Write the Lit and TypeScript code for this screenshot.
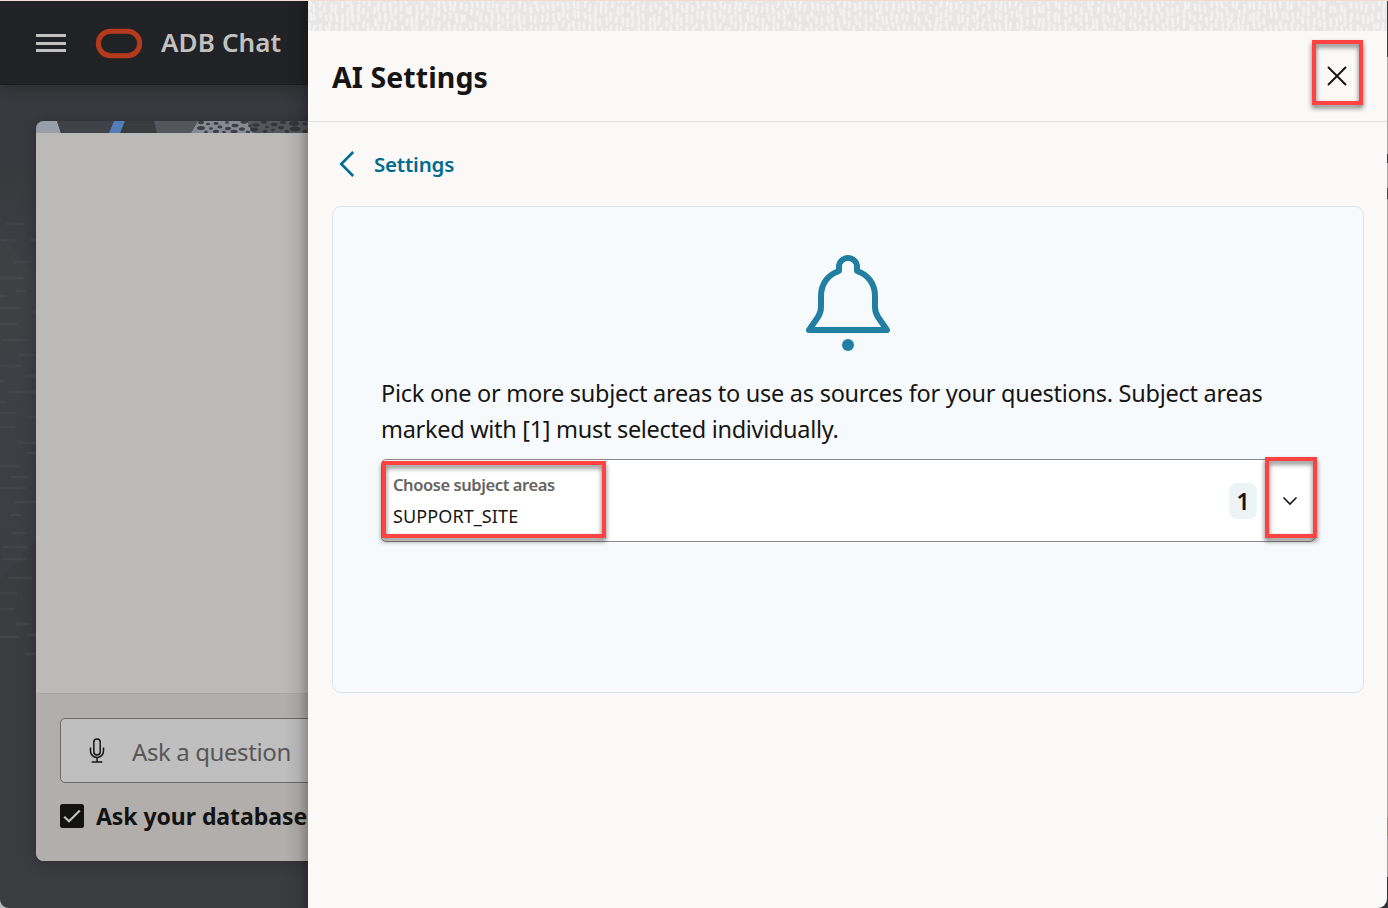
import { LitElement, html, css, svg } from "lit";
import { customElement } from "lit/decorators.js";

/** Small deterministic generator so the decorative textures are stable. */
function seeded(seed: number) {
  let s = seed;
  return () => {
    s = (s * 1664525 + 1013904223) % 4294967296;
    return s / 4294967296;
  };
}

function weave() {
  const rnd = seeded(7);
  let d = "";
  for (let x = 0; x < 1080; x += 5.4) {
    for (let y = -4 - rnd() * 8; y < 32; y += 9 + rnd() * 4) {
      const px = x + rnd() * 2.6;
      d += `M${px.toFixed(1)} ${y.toFixed(1)}l${(rnd() * 2 - 1).toFixed(1)} ${(4 + rnd() * 4).toFixed(1)}`;
    }
  }
  return d;
}

const PEBBLES: number[][] = [
  [165, 1.5, 3], [172, 3, 2], [180, 2.5, 2.5], [191, 1.5, 2], [199, 4.5, 3.5], [208, 1, 3.5],
  [165, 7, 4], [175, 7.5, 2], [184, 6, 2.5], [192, 7.5, 3], [206, 8, 3], [198, 10.5, 3.5],
  [180, 10.5, 3], [170, 11, 1.8], [188, 11, 1.8], [212, 11, 2.2], [214, 5, 2], [220, 4, 3.5],
  [218, 8.5, 4], [228, 1, 3], [231, 6, 2], [229, 10.5, 2.6], [238, 3.5, 3.5], [237, 9, 2],
  [247, 1.5, 3], [245, 6.5, 3], [251, 10.5, 2.4], [259, 8, 5.5], [258, 2.5, 5], [269, 3, 2.5],
  [269, 10.5, 2.5], [276, 6, 4],
];

const WAVES: number[][] = [
  [7, 73, 17], [3, 89, 12], [31, 89, 5], [15, 111, 14], [0, 127, 23], [17, 140, 8], [0, 145, 5],
  [0, 157, 18], [31, 161, 5], [0, 173, 17], [3, 189, 26], [20, 204, 14], [0, 215, 20],
  [27, 225, 9], [0, 230, 4], [9, 241, 27], [0, 251, 6], [0, 262, 16], [28, 266, 8], [0, 276, 14],
  [19, 292, 17], [27, 302, 9], [0, 315, 20], [12, 326, 16], [0, 337, 25], [15, 351, 21],
  [11, 364, 10], [12, 382, 13], [4, 396, 23], [4, 408, 22], [9, 427, 22], [0, 442, 16],
  [0, 458, 14], [16, 473, 13], [27, 484, 9], [0, 486, 17], [26, 503, 10],
];

@customElement("chat-backdrop")
class ChatBackdrop extends LitElement {
  static styles = css`
    :host { display: flex; flex-direction: column; width: 308px; height: 907px; overflow: hidden; position: relative; background: #3b3c40; font-family: "Noto Sans", "Open Sans", sans-serif; }
    .scene { position: absolute; left: 0; top: 84px; width: 308px; height: 823px; }
    .bar { position: relative; height: 84px; flex: none; box-sizing: border-box; background: #212225; border-bottom: 1px solid #1c1d20; box-shadow: 0 4px 14px rgba(20, 18, 20, .32); display: flex; align-items: center; padding: 1px 0 0 36px; }
    .menu { width: 30px; height: 18px; display: flex; flex-direction: column; justify-content: space-between; }
    .menu i { height: 3px; background: #c2c1c0; }
    .logo { margin-left: 29px; width: 48px; height: 31px; }
    .name { margin: -2px 0 0 18px; font-size: 26px; font-weight: 600; color: #c2c1c0; white-space: nowrap; line-height: 36px; letter-spacing: .12px; }
    .card { position: relative; margin: 36px 0 0 36px; width: 400px; height: 740px; flex: none; border-radius: 8px; overflow: hidden; display: flex; flex-direction: column; background: #bbbab8; }
    .halo { position: absolute; left: 36px; top: 120px; width: 400px; height: 740px; border-radius: 8px; box-shadow: 0 2px 14px rgba(20, 18, 24, .3); }
    .strip { height: 12px; display: block; flex: none; }
    .thread { height: 560px; flex: none; }
    .foot { flex: 1; background: #b2aeab; border-top: 1px solid #aaa8a5; padding: 24px 24px 0; }
    .ask { box-sizing: border-box; height: 65px; border: 1px solid #6b6a69; border-radius: 5px; background: #bfbfbf; display: flex; align-items: center; padding-left: 26px; }
    .ask span { margin-left: 25px; font-size: 24px; color: #585756; white-space: nowrap; line-height: 34px; padding-top: 2px; letter-spacing: -.4px; }
    .opt { display: flex; align-items: center; margin-top: 16px; height: 34px; white-space: nowrap; }
    .opt b { margin-left: 12px; font-size: 23px; font-weight: 700; color: #121211; line-height: 34px; letter-spacing: -.06px; }
    .shade { position: absolute; right: 0; top: 0; width: 24px; height: 907px; background: linear-gradient(90deg, transparent, rgba(0, 0, 0, .07) 60%, rgba(0, 0, 0, .25)); }
    .corner { position: absolute; left: 0; bottom: 0; width: 9px; height: 9px; background: radial-gradient(circle at 9px 0, transparent 8.5px, #b9b8b8 9.5px); }
  `;

  render() {
    return html`
      <svg class="scene" viewBox="0 0 308 823">
        <defs><linearGradient id="g" x1="0" y1="0" x2="0" y2="1"><stop offset="0" stop-color="#373a3e" /><stop offset=".18" stop-color="#383b3e" /><stop offset=".45" stop-color="#3d4145" /><stop offset="1" stop-color="#3b3f44" /></linearGradient></defs>
        <path d="M0 0H308V455H36L0 495Z" fill="url(#g)" />
        <path d="M0 149L36 190V240L0 278Z" fill="#3e4144" />
        <g transform="translate(0 66)" fill="none" stroke="#4a4c4e" stroke-width="2.400" stroke-linecap="round" opacity=".5">
          ${WAVES.map(([x, y, w]) => svg`<path d="M${x} ${y}h${w}" />`)}
        </g>
      </svg>
      <div class="bar">
        <div class="menu"><i></i><i></i><i></i></div>
        <svg class="logo" viewBox="0 0 48 31"><rect x="3.3" y="3.3" width="41.4" height="24.4" rx="12.2" fill="none" stroke="#b5391d" stroke-width="5" /></svg>
        <span class="name">ADB Chat</span>
      </div>
      <div class="halo"></div>
      <div class="card">
        <svg class="strip" width="400" height="12" viewBox="0 0 400 12">
          <rect width="400" height="12" fill="#393c3f" />
          <path d="M0 0H21L25 12H0Z" fill="#989fa9" />
          <path d="M21 0H78L73 12H25Z" fill="#404249" />
          <path d="M78 0H89L84 12H73Z" fill="#557db7" />
          <path d="M118 0H162L155 12H121Z" fill="#53565c" />
          <path d="M162 0H211L217 12H155Z" fill="#858a94" />
          <path d="M211 0H300V12H217Z" fill="#53565a" />
          <g fill="#303337" opacity=".85">${PEBBLES.map(([x, y, r]) => svg`<ellipse cx=${x} cy=${y} rx=${r} ry=${0.5 + r * 0.38} />`)}</g>
        </svg>
        <div class="thread"></div>
        <div class="foot">
          <div class="ask">
            <svg width="20" height="28" viewBox="0 0 20 28" fill="none" stroke="#171716" stroke-width="1.5">
              <rect x="6.8" y="2" width="6.4" height="16" rx="3.2" /><path d="M3.5 10.5V14a6.5 6.5 0 0 0 13 0V10.500M10 20.500V25M4.700 25H15.300" />
            </svg>
            <span>Ask a question</span>
          </div>
          <div class="opt">
            <svg width="24" height="24" viewBox="0 0 24 24"><rect width="24" height="24" rx="2.5" fill="#121211" /><path d="M4.200 12.700L9 17.300L19.800 6.500" fill="none" stroke="#c0bfbd" stroke-width="2.200" /></svg>
            <b>Ask your database</b>
          </div>
        </div>
      </div>
      <div class="shade"></div>
      <div class="corner"></div>
    `;
  }
}

@customElement("settings-drawer")
class SettingsDrawer extends LitElement {
  static styles = css`
    :host { display: flex; flex-direction: column; width: 1079px; height: 907px; box-sizing: border-box; background: #faf9f8; border-radius: 0 0 9px 0; overflow: hidden; color: #161513; font-family: "Noto Sans", "Open Sans", sans-serif; }
    .weave { display: block; height: 30px; flex: none; background: #e8e7e6; }
    .head { height: 91px; flex: none; box-sizing: border-box; border-bottom: 1px solid #e0dfde; display: flex; justify-content: space-between; align-items: center; padding: 0 24px; }
    h1 { margin: 2px 0 0; font-size: 28.5px; line-height: 40px; font-weight: 700; white-space: nowrap; letter-spacing: .08px; }
    .mark { position: absolute; box-sizing: border-box; border: 4px solid #ff4242; filter: drop-shadow(0 3px 2.500px rgba(0, 0, 0, .55)); pointer-events: none; }
    .close { position: relative; width: 51px; height: 65px; display: flex; align-items: center; justify-content: center; margin-top: -7px; }
    .close .mark { inset: 0; }
    .close svg { margin: 6px 2px 0 0; }
    .back { height: 84px; flex: none; display: flex; align-items: center; padding-left: 31px; color: #006b8f; box-sizing: border-box; }
    .back span { margin: 0 0 0 18px; font-size: 20.5px; font-weight: 600; line-height: 30px; white-space: nowrap; letter-spacing: -.2px; }
    .panel { margin: 0 23px 0 24px; height: 487px; box-sizing: border-box; border: 1px solid #dfe4e7; border-radius: 9px; background: #f6fafd; display: flex; flex-direction: column; padding: 44px 48px 0 48px; }
    .bell { display: block; align-self: center; flex: none; }
    p { margin: 20px 0 0; font-size: 23.5px; line-height: 36px; white-space: nowrap; }
    p span { display: block; }
    .l1 { letter-spacing: -.26px; }
    .l2 { letter-spacing: -.3px; }
    .field { position: relative; margin-top: 12px; height: 83px; box-sizing: border-box; border: 1px solid #8b8a89; border-radius: 5px; background: #fff; display: flex; align-items: center; }
    .text { flex: 1; display: flex; flex-direction: column; padding: 0 0 0 11px; gap: 5px; }
    .label { font-size: 16.500px; font-weight: 600; color: #656361; line-height: 26px; letter-spacing: -.42px; }
    .value { font-size: 18px; line-height: 27px; color: #161513; letter-spacing: .1px; }
    .count { width: 28px; height: 36px; border-radius: 8px; background: #ecf4f6; display: flex; align-items: center; justify-content: center; font-size: 23px; font-weight: 600; }
    .chev { margin: 0 16.500px 0 24.500px; }
    .m1 { left: 0; top: 1px; width: 224px; height: 77px; }
    .m2 { right: -3px; top: -3px; width: 52px; height: 81px; }
  `;

  render() {
    return html`
      <svg class="weave" width="1079" height="30" viewBox="0 0 1079 30"><path d=${weave()} fill="none" stroke="#faf9f8" stroke-width="2.700" stroke-linecap="round" opacity=".62" /></svg>
      <div class="head">
        <h1>AI Settings</h1>
        <div class="close">
          <svg width="20" height="20" viewBox="0 0 20 20" fill="none" stroke="#161513" stroke-width="1.900"><path d="M1 1L19 19M19 1L1 19" /></svg>
          <div class="mark"></div>
        </div>
      </div>
      <div class="back">
        <svg width="17" height="26" viewBox="0 0 17 26" fill="none" stroke="#006b8f" stroke-width="2.500"><path d="M14.200 1L2.200 13L14.200 25" /></svg>
        <span>Settings</span>
      </div>
      <div class="panel">
        <svg class="bell" width="92" height="104" viewBox="802 251 92 104" fill="none" stroke="#217fa2" stroke-width="6" stroke-linejoin="round">
          <path d="M839 271V267A9 9 0 0 1 857 267V271C868 274.500 875 284 875 296V307C875 311 876 314 878 317L887 330H809L818 317C820 314 821 311 821 307V296C821 284 828 274.500 839 271Z" />
          <path d="M842 271V267A6 6 0 0 1 854 267V276H842Z" fill="#f6fafd" stroke="none" />
          <circle cx="848" cy="345" r="6" fill="#217fa2" stroke="none" />
        </svg>
        <p>
          <span class="l1">Pick one or more subject areas to use as sources for your questions. Subject areas</span>
          <span class="l2">marked with [1] must selected individually.</span>
        </p>
        <div class="field">
          <div class="text"><span class="label">Choose subject areas</span><span class="value">SUPPORT_SITE</span></div>
          <div class="count">1</div>
          <svg class="chev" width="16" height="10" viewBox="0 0 16 10" fill="none" stroke="#161513" stroke-width="1.600"><path d="M1.500 1.500L8 8L14.500 1.500" /></svg>
          <div class="mark m1"></div>
          <div class="mark m2"></div>
        </div>
      </div>
    `;
  }
}

@customElement("app-root")
class AppRoot extends LitElement {
  static styles = css`
    :host { display: block; width: 1388px; height: 908px; overflow: hidden; }
    .frame { box-sizing: border-box; width: 1388px; height: 908px; border-top: 1px solid #f5dcd2; display: flex; background: linear-gradient(#3a3a3c 0 56px, #aaa9aa 56px 153px, #3b3a42 153px 162px, #aaa9aa 162px 187px, #4a4345 187px 198px, #aaa9aa 198px 817px, #9f9278 817px 835px, #a0a0a2 835px 876px, #303136 876px); }
  `;

  render() {
    return html`<div class="frame"><chat-backdrop></chat-backdrop><settings-drawer></settings-drawer></div>`;
  }
}
